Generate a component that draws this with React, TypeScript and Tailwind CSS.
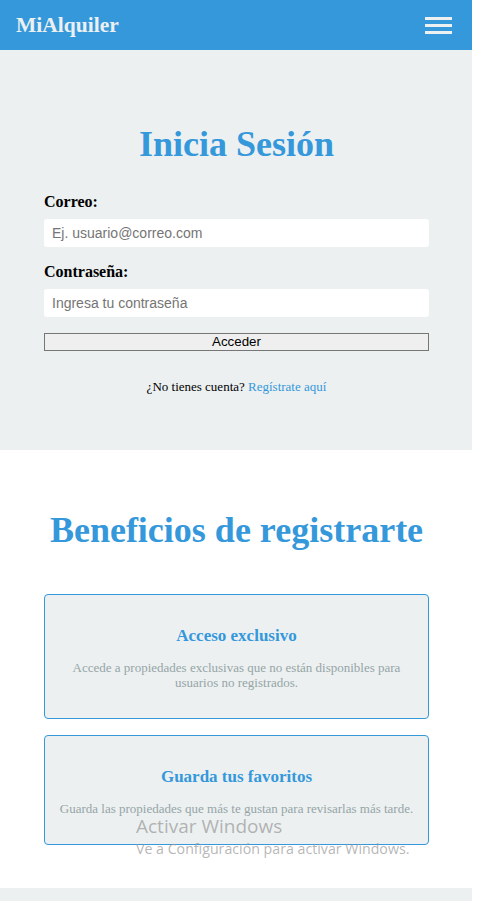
import React from "react";

export default function App() {
  return (
    <div className="relative w-[472px] bg-white font-['Liberation_Serif',serif] text-black">
      <header className="flex h-[50px] items-center justify-between bg-[#3498db] pl-[16px] pr-[20px]">
        <h1 className="text-[21.5px] font-bold leading-[26px] text-[#ecf0f1]">MiAlquiler</h1>
        <div className="flex w-[27px] flex-col gap-[4px] pt-[1px]">
          <span className="block h-[3px] w-full bg-[#ecf0f1]" />
          <span className="block h-[3px] w-full bg-[#ecf0f1]" />
          <span className="block h-[3px] w-full bg-[#ecf0f1]" />
        </div>
      </header>

      <section className="h-[400px] bg-[#ecf0f1] pl-[44px] pr-[43px] pt-[73px]">
        <h2 className="text-center text-[36px] font-bold leading-[42px] text-[#3498db]">Inicia Sesión</h2>
        <form className="mt-[28px] flex flex-col" onSubmit={(e) => e.preventDefault()}>
          <label className="text-[16px] font-bold leading-[18px]">Correo:</label>
          <input
            type="email"
            placeholder="Ej. usuario@correo.com"
            className="mt-[8px] h-[28px] w-full rounded-[3px] bg-white px-[8px] font-['Liberation_Sans',Arial,sans-serif] text-[14px] text-black outline-none placeholder:text-[#757575]"
          />
          <label className="mt-[16px] text-[16px] font-bold leading-[18px]">Contraseña:</label>
          <input
            type="password"
            placeholder="Ingresa tu contraseña"
            className="mt-[8px] h-[28px] w-full rounded-[3px] bg-white px-[8px] font-['Liberation_Sans',Arial,sans-serif] text-[14px] text-black outline-none placeholder:text-[#757575]"
          />
          <button
            type="submit"
            className="mt-[16px] h-[18px] w-full border border-[#767676] bg-[#efefef] font-['Liberation_Sans',Arial,sans-serif] text-[13.33px] leading-[16px] text-black"
          >
            Acceder
          </button>
        </form>
        <p className="mt-[28px] text-center text-[13px] leading-[15px]">
          ¿No tienes cuenta? <a className="text-[#3498db]">Regístrate aquí</a>
        </p>
      </section>

      <section className="bg-white pl-[44px] pr-[43px] pt-[59px] pb-[43px]">
        <h2 className="text-center text-[36px] font-bold leading-[42px] text-[#3498db]">Beneficios de registrarte</h2>
        <div className="mt-[43px] flex flex-col gap-[16px]">
          <div className="rounded-[4px] border border-[#3498db] bg-[#ecf0f1] px-[12px] pt-[31px] pb-[28px] text-center">
            <h3 className="text-[17px] font-bold leading-[20px] text-[#3498db]">Acceso exclusivo</h3>
            <p className="mt-[14px] text-[13px] leading-[15px] text-[#95a5a6]">
              Accede a propiedades exclusivas que no están disponibles para usuarios no registrados.
            </p>
          </div>
          <div className="rounded-[4px] border border-[#3498db] bg-[#ecf0f1] px-[12px] pt-[31px] pb-[28px] text-center">
            <h3 className="text-[17px] font-bold leading-[20px] text-[#3498db]">Guarda tus favoritos</h3>
            <p className="mt-[14px] text-[13px] leading-[15px] text-[#95a5a6]">
              Guarda las propiedades que más te gustan para revisarlas más tarde.
            </p>
          </div>
        </div>
      </section>

      <footer className="h-[13px] bg-[#ecf0f1]" />

      <div className="pointer-events-none absolute left-[136px] top-[813px] font-['Open_Sans',sans-serif] text-[rgba(150,150,150,0.7)]">
        <div className="text-[19px] leading-[26px]">Activar Windows</div>
        <div className="text-[14.2px] leading-[20px]">Ve a Configuración para activar Windows.</div>
      </div>
    </div>
  );
}
